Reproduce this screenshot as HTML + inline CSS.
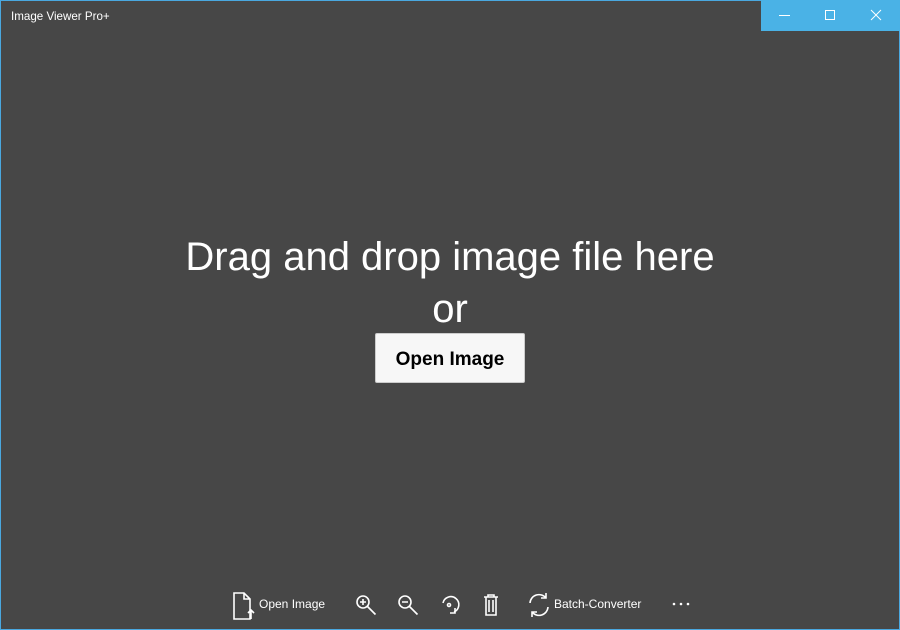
<!DOCTYPE html>
<html><head><style>
html,body{margin:0;padding:0}
body{width:900px;height:630px;position:relative;overflow:hidden;background:#474747;font-family:"Liberation Sans",sans-serif;color:#fff}
.frame{position:absolute;left:0;top:0;width:898px;height:628px;border:1px solid #4aa8e0}
.title{position:absolute;left:11px;top:10px;font-size:11.6px}
.caps{position:absolute;left:761px;top:0;width:139px;height:31px;background:#4ab2e6}
.t{position:absolute;left:0;width:900px;text-align:center}
.btn{position:absolute;left:375px;top:333px;width:148px;height:48px;background:#f7f7f7;border:1px solid #ccc;border-radius:2px;color:#000;font-weight:bold;font-size:19px;text-align:center;line-height:51px}
.lbl{position:absolute;top:597px;font-size:12px}
svg{position:absolute}
</style></head><body>
<div class="frame"></div>
<div class="title">Image Viewer Pro+</div>
<div class="caps">
<svg width="139" height="31" style="left:0;top:0"><g stroke="#fff" stroke-width="1" fill="none">
<line x1="18" y1="15.5" x2="29" y2="15.5"/>
<rect x="64.5" y="10.5" width="9" height="9"/>
<line x1="110" y1="10" x2="120" y2="20"/><line x1="120" y1="10" x2="110" y2="20"/></g></svg>
</div>
<div class="t" style="top:235px;font-size:40px">Drag and drop image file here</div>
<div class="t" style="top:287px;font-size:40px">or</div>
<div class="btn">Open Image</div>
<svg width="480" height="40" style="left:220px;top:585px"><g stroke="#fff" stroke-width="1.6" fill="none">
<path d="M14 8h10l6 6v20H14z M24 8v6h6"/>
<path d="M31 34v-9 M28 28l3-3 3 3"/>
<circle cx="143" cy="17" r="6"/><path d="M147.5 21.5l8 8 M140 17h6 M143 14v6"/>
<circle cx="185" cy="17" r="6"/><path d="M189.5 21.5l8 8 M182 17h6"/>
<path d="M223 18a8 8 0 1 1 11 9"/><path d="M235 23v5h-5"/><circle cx="229" cy="20" r="1.5"/>
<path d="M264 12h14 M268 12v-2h6v2 M266 12v18h10v-18 M269 15v12 M273 15v12"/>
<path d="M310 18a9 9 0 0 1 16-5 M326 8v5h-5 M328 22a9 9 0 0 1-16 5 M312 32v-5h5"/>
</g><g fill="#fff"><circle cx="454" cy="19" r="1.3"/><circle cx="461" cy="19" r="1.3"/><circle cx="468" cy="19" r="1.3"/></g></svg>
<div class="lbl" style="left:259px">Open Image</div>
<div class="lbl" style="left:554px">Batch-Converter</div>
</body></html>
